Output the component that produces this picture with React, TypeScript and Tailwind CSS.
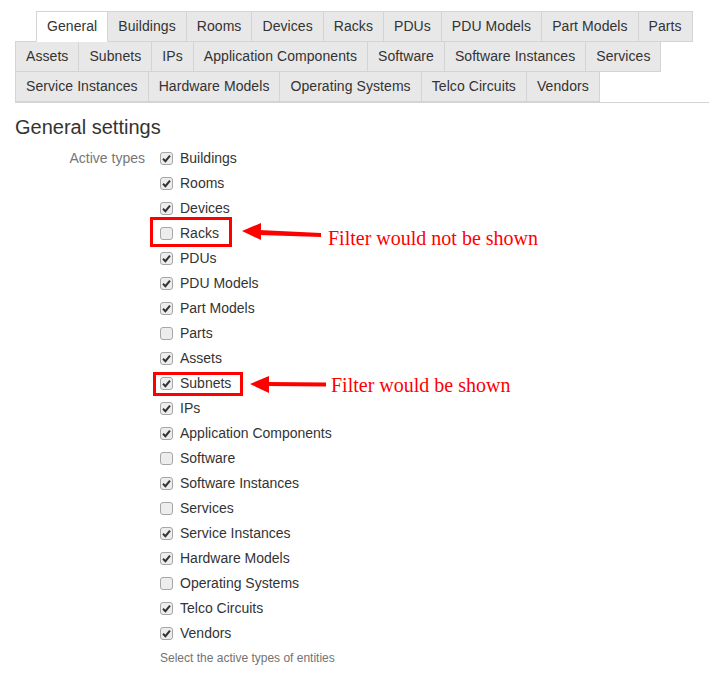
const rows: string[][] = [
  ["General", "Buildings", "Rooms", "Devices", "Racks", "PDUs", "PDU Models", "Part Models", "Parts"],
  ["Assets", "Subnets", "IPs", "Application Components", "Software", "Software Instances", "Services"],
  ["Service Instances", "Hardware Models", "Operating Systems", "Telco Circuits", "Vendors"],
];

const types: [string, boolean][] = [
  ["Buildings", true],
  ["Rooms", true],
  ["Devices", true],
  ["Racks", false],
  ["PDUs", true],
  ["PDU Models", true],
  ["Part Models", true],
  ["Parts", false],
  ["Assets", true],
  ["Subnets", true],
  ["IPs", true],
  ["Application Components", true],
  ["Software", false],
  ["Software Instances", true],
  ["Services", false],
  ["Service Instances", true],
  ["Hardware Models", true],
  ["Operating Systems", false],
  ["Telco Circuits", true],
  ["Vendors", true],
];

function Box({ checked }: { checked: boolean }) {
  return (
    <span className="flex h-[13px] w-[13px] items-center justify-center rounded-[3px] border border-[#a6a6a6] bg-[#ededed]">
      {checked && (
        <svg width="9" height="9" viewBox="0 0 9 9">
          <path d="M1 4.8 L3.4 7.2 L8 1.6" fill="none" stroke="#333" strokeWidth="2" />
        </svg>
      )}
    </span>
  );
}

export default function App() {
  return (
    <div className="relative h-[692px] w-[722px] bg-white text-[14px] text-[#333] [font-family:'Liberation_Sans',Arial,sans-serif]">
      <div className="ml-[15px] w-[694px] border-b border-[#d4d4d4] pt-[11px] tracking-[0.07px]">
        {rows.map((row, r) => (
          <div key={r} className={`flex ${r === 0 ? "ml-[21px]" : "-mt-px"}`}>
            {row.map((t, i) => (
              <div
                key={t}
                className={`h-[31px] border border-[#d4d4d4] px-[10px] leading-[29px] ${i > 0 ? "-ml-px" : ""} ${
                  r === 0 && i === 0 ? "relative z-10 border-b-white bg-white" : "bg-[#e8e8e8]"
                }`}
              >
                {t}
              </div>
            ))}
          </div>
        ))}
      </div>

      <div className="px-[15px]">
        <h2 className="mt-[12px] text-[20px] leading-[24px] text-[#333]">General settings</h2>
        <div className="mt-[7px] flex">
          <div className="w-[130px] text-right leading-[25px] text-[#777]">Active types</div>
          <div className="ml-[15px]">
            {types.map(([t, c]) => (
              <div key={t} className="flex h-[25px] items-center gap-[7px]">
                <Box checked={c} />
                <span>{t}</span>
              </div>
            ))}
            <div className="mt-[3px] text-[12px] text-[#737373]">Select the active types of entities</div>
          </div>
        </div>
      </div>

      {/* annotations */}
      <div className="absolute left-[150px] top-[217px] h-[30px] w-[82px] border-[3px] border-[#ff0000]" />
      <div className="absolute left-[153px] top-[372px] h-[24px] w-[90px] border-[3px] border-[#ff0000]" />
      <svg className="absolute left-0 top-0" width="722" height="692">
        <polygon points="242,231 261,223 261,240" fill="#ff0000" />
        <polygon points="259,230 321,233 321,237 259,235" fill="#ff0000" />
        <polygon points="250,384 269,376 269,393" fill="#ff0000" />
        <polygon points="267,382 326,382.5 326,386.5 267,386" fill="#ff0000" />
      </svg>
      <div className="absolute left-[328px] top-[225px] text-[20px] leading-[26px] text-[#ff0000] [font-family:'Liberation_Serif','Times_New_Roman',serif]">
        Filter would not be shown
      </div>
      <div className="absolute left-[331px] top-[372px] text-[20px] leading-[26px] text-[#ff0000] [font-family:'Liberation_Serif','Times_New_Roman',serif]">
        Filter would be shown
      </div>
    </div>
  );
}
